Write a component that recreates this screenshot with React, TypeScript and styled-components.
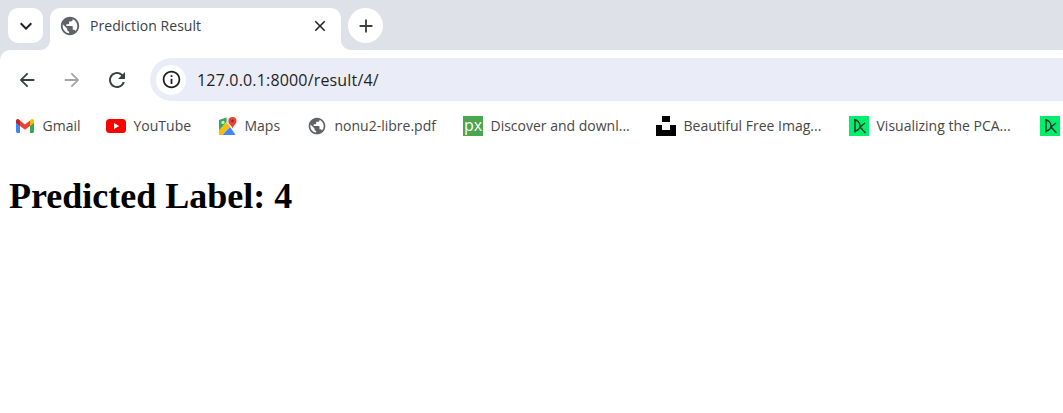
import * as React from 'react';
import styled, { createGlobalStyle } from 'styled-components';
import { MdAdd, MdArrowBack, MdArrowForward, MdClose, MdInfoOutline, MdKeyboardArrowDown, MdPublic, MdRefresh } from 'react-icons/md';

const GlobalStyle = createGlobalStyle`
    html, body {
        margin: 0;
        padding: 0;
        background: #ffffff;
        overflow: hidden;
    }
    body {
        font-family: "Open Sans", "Noto Sans", sans-serif;
    }
`

const GmailIcon = () => (
    <svg width="18" height="14" viewBox="0 0 18 14">
        <path d="M0 3v9.6C0 13.4.6 14 1.3 14H4V6.5z" fill="#4285f4" />
        <path d="M14 6.5V14h2.7c.7 0 1.3-.6 1.3-1.4V3z" fill="#34a853" />
        <path d="M4 7V1.6L9 5.4l5-3.8V7L9 10.8z" fill="#ea4335" />
        <path d="M0 1.8C0 .4 1.6-.5 2.8.4L4 1.4V7L0 3.8z" fill="#c5221f" />
        <path d="M14 1.4l1.2-1C16.4-.5 18 .4 18 1.8v2L14 7z" fill="#fbbc04" />
    </svg>
)

const YoutubeIcon = () => (
    <svg width="20" height="14" viewBox="0 0 20 14">
        <rect width="20" height="14" rx="3.5" fill="#ff0000" />
        <path d="M8 4l5.2 3L8 10z" fill="#ffffff" />
    </svg>
)

const MapsIcon = () => (
    <svg width="19" height="18" viewBox="0 0 19 18">
        <path d="M1 3l8-2.500 3 1.500v8l5 5.500V18H1z" fill="#dfe3dc" />
        <path d="M1 3l7.500-2.500V5L1 13.500z" fill="#34a853" />
        <path d="M1 13.500L8.500 6l3.500 3.500L4 18H1z" fill="#fbbc04" />
        <path d="M4.500 18l7.500-8 5.500 8z" fill="#4285f4" />
        <circle cx="5" cy="5.500" r="1.700" fill="#cfe8d2" />
        <path d="M14.500 0a4 4 0 0 1 4 4c0 2.800-2.700 4.200-4 7.500C13.200 8.200 10.500 6.800 10.500 4a4 4 0 0 1 4-4z" fill="#ea4335" />
        <circle cx="14.500" cy="4" r="1.400" fill="#a52714" />
    </svg>
)

const UnsplashIcon = () => (
    <svg width="20" height="20" viewBox="0 0 20 20">
        <path d="M6 0h8v6H6zM0 9h6v5h8V9h6v11H0z" fill="#000000" />
    </svg>
)

const DkIcon = () => (
    <svg width="20" height="20" viewBox="0 0 20 20">
        <rect width="20" height="20" fill="#00ef6b" />
        <path d="M6 3v13.500M5 3.500c3 .5 6 3 6 6 0 3-2.500 5-5 5.500M16 7l-5 4 5.500 6" fill="none" stroke="#10352c" strokeWidth="1.400" />
    </svg>
)

export default function App() {
    const bookmarks = [
        { icon: <GmailIcon />, label: 'Gmail', width: 91 },
        { icon: <YoutubeIcon />, label: 'YouTube', width: 111 },
        { icon: <MapsIcon />, label: 'Maps', width: 90 },
        { icon: <MdPublic size={24} color="#5f6368" />, label: 'nonu2-libre.pdf', width: 156 },
        { icon: <PxIcon>px</PxIcon>, label: 'Discover and downl...', width: 193 },
        { icon: <UnsplashIcon />, label: 'Beautiful Free Imag...', width: 193 },
        { icon: <DkIcon />, label: 'Visualizing the PCA...', width: 191 },
        { icon: <DkIcon />, label: '', width: 30 },
    ];
    return (
        <>
            <GlobalStyle />
            <Browser>
                <TabStrip>
                    <TabSearch><MdKeyboardArrowDown size={24} /></TabSearch>
                    <Tab>
                        <MdPublic size={22} color="#5f6368" />
                        <TabTitle>Prediction Result</TabTitle>
                        <MdClose size={18} color="#1f1f1f" />
                    </Tab>
                    <NewTab><MdAdd size={22} /></NewTab>
                </TabStrip>
                <Toolbar>
                    <NavButton><MdArrowBack size={22} /></NavButton>
                    <NavButton $disabled><MdArrowForward size={22} /></NavButton>
                    <NavButton><MdRefresh size={24} /></NavButton>
                    <AddressBar>
                        <InfoBadge><MdInfoOutline size={21} /></InfoBadge>
                        <Url>127.0.0.1:8000/result/4/</Url>
                    </AddressBar>
                </Toolbar>
                <BookmarkBar>
                    {bookmarks.map((item, index) => (
                        <Bookmark key={index} style={{ width: item.width }}>
                            <BookmarkIcon>{item.icon}</BookmarkIcon>
                            {item.label && <BookmarkLabel>{item.label}</BookmarkLabel>}
                        </Bookmark>
                    ))}
                </BookmarkBar>
            </Browser>
            <Page>
                <Heading>Predicted Label: 4</Heading>
            </Page>
        </>
    )
}

const Browser = styled.div`
    width: 1063px;
    background: #dee1e7;
    display: flex;
    flex-direction: column;
`
const TabStrip = styled.div`
    height: 50px;
    box-sizing: border-box;
    padding: 8px 0 0 8px;
    display: flex;
    align-items: flex-start;
`
const TabSearch = styled.div`
    width: 35px;
    height: 35px;
    border-radius: 10px;
    background: #ffffff;
    color: #1f1f1f;
    display: flex;
    align-items: center;
    justify-content: center;
`
const Tab = styled.div`
    position: relative;
    width: 291px;
    height: 42px;
    margin-left: 7px;
    padding: 0 12px 7px 9px;
    box-sizing: border-box;
    border-radius: 10px 10px 0 0;
    background: #ffffff;
    display: flex;
    align-items: center;
    &::before, &::after {
        content: "";
        position: absolute;
        bottom: 0;
        width: 10px;
        height: 10px;
        background: radial-gradient(circle at var(--cx) 0, #dee1e7 9.5px, #ffffff 10.5px);
    }
    &::before {
        --cx: 0;
        left: -10px;
    }
    &::after {
        --cx: 100%;
        right: -10px;
    }
`
const TabTitle = styled.span`
    flex: 1;
    margin-left: 9px;
    font-size: 14px;
    letter-spacing: 0.05px;
    color: #3c4043;
`
const NewTab = styled.div`
    width: 35px;
    height: 35px;
    margin-left: 7px;
    border-radius: 50%;
    background: #ffffff;
    color: #3c4043;
    display: flex;
    align-items: center;
    justify-content: center;
`
const Toolbar = styled.div`
    height: 58px;
    box-sizing: border-box;
    padding: 8px 0 7px 8px;
    border-radius: 10px 0 0 0;
    background: #ffffff;
    display: flex;
    align-items: center;
`
const NavButton = styled.div<{ $disabled?: boolean }>`
    width: 37px;
    height: 36px;
    margin-right: 8px;
    color: ${props => props.$disabled ? '#a3a5a8' : '#3c4043'};
    display: flex;
    align-items: center;
    justify-content: center;
    &:nth-child(3) {
        margin-right: 15px;
    }
`
const AddressBar = styled.div`
    flex: 1;
    height: 43px;
    margin-right: -30px;
    padding-left: 6px;
    border-radius: 22px;
    background: #eaedf7;
    display: flex;
    align-items: center;
`
const InfoBadge = styled.div`
    width: 30px;
    height: 30px;
    border-radius: 50%;
    background: #ffffff;
    color: #1f1f1f;
    display: flex;
    align-items: center;
    justify-content: center;
`
const Url = styled.span`
    margin-left: 11px;
    font-size: 16px;
    letter-spacing: 0.17px;
    color: #1f1f1f;
`
const BookmarkBar = styled.div`
    height: 36px;
    padding-left: 15px;
    box-sizing: border-box;
    background: #ffffff;
    display: flex;
    align-items: center;
    overflow: hidden;
`
const Bookmark = styled.div`
    flex: none;
    display: flex;
    align-items: center;
    gap: 7.5px;
`
const BookmarkIcon = styled.span`
    width: 20px;
    height: 20px;
    display: flex;
    align-items: center;
    justify-content: center;
`
const BookmarkLabel = styled.span`
    padding-bottom: 2px;
    font-size: 14px;
    color: #474747;
    white-space: nowrap;
`
const PxIcon = styled.span`
    width: 20px;
    height: 20px;
    background: #4ca64f;
    color: #ffffff;
    font-size: 16px;
    line-height: 19px;
    text-align: center;
`
const Page = styled.main`
    padding: 0 9px;
`
const Heading = styled.h1`
    margin: 31px 0 0 0;
    font-family: "Liberation Serif", "Times New Roman", serif;
    font-size: 36px;
    font-weight: 700;
    color: #000000;
`
